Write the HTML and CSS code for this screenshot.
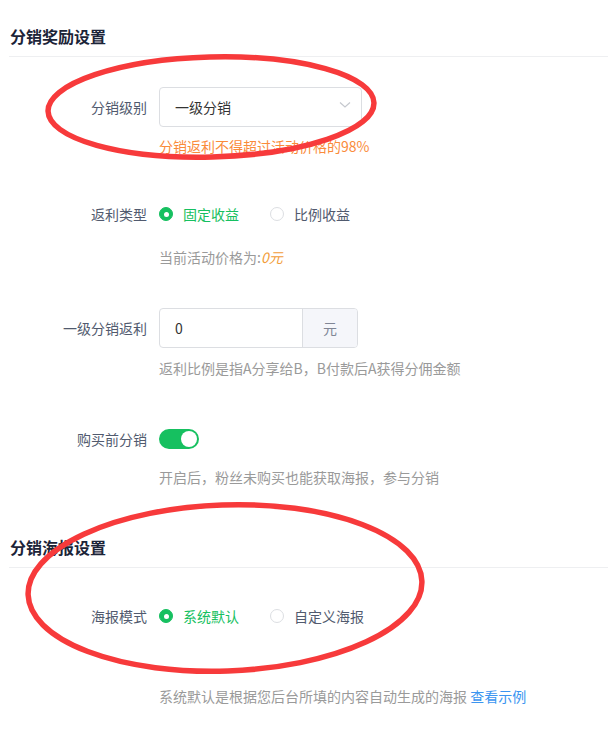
FILE: index.html
```html
<!DOCTYPE html>
<html lang="zh-CN">
<head>
    <meta charset="UTF-8">
    <meta name="viewport" content="width=device-width, initial-scale=1.0">
    <title>分销设置</title>

    <link rel="stylesheet" href="styles.css">
</head>
<body>
    <div class="page">
        <div class="section-title">分销奖励设置</div>

        <div class="form-item item-level">
            <div class="label">分销级别</div>
            <div class="control">
                <div class="select">
                    <span>一级分销</span>
                    <svg class="arrow" width="12" height="8" viewBox="0 0 12 8">
                        <polyline points="1,1.5 6,6 11,1.5" fill="none" stroke="#c5c8ce" stroke-width="1.2"/>
                    </svg>
                </div>
            </div>
        </div>
        <div class="tip error-tip">分销返利不得超过活动价格的98%</div>

        <div class="form-item item-type">
            <div class="label">返利类型</div>
            <div class="control">
                <label class="radio checked"><span class="radio-dot"></span>固定收益</label>
                <label class="radio"><span class="radio-dot"></span>比例收益</label>
            </div>
        </div>
        <div class="tip tip-price">当前活动价格为:<em>0元</em></div>

        <div class="form-item item-amount">
            <div class="label">一级分销返利</div>
            <div class="control">
                <div class="input-group">
                    <div class="input">0</div>
                    <div class="append">元</div>
                </div>
            </div>
        </div>
        <div class="tip tip-ratio">返利比例是指A分享给B，B付款后A获得分佣金额</div>

        <div class="form-item item-switch">
            <div class="label">购买前分销</div>
            <div class="control">
                <span class="switch on"><span class="knob"></span></span>
            </div>
        </div>
        <div class="tip tip-switch">开启后，粉丝未购买也能获取海报，参与分销</div>

        <div class="section-title second">分销海报设置</div>

        <div class="form-item item-poster">
            <div class="label">海报模式</div>
            <div class="control">
                <label class="radio checked"><span class="radio-dot"></span>系统默认</label>
                <label class="radio"><span class="radio-dot"></span>自定义海报</label>
            </div>
        </div>
        <div class="tip tip-poster">系统默认是根据您后台所填的内容自动生成的海报 <a href="#">查看示例</a></div>
    </div>

    <!-- hand drawn marks on top of the screenshot -->
    <svg class="marks" width="608" height="732" viewBox="0 0 608 732">
        <ellipse cx="211" cy="107" rx="163" ry="50" transform="rotate(-1.5 211 107)"/>
        <ellipse cx="225" cy="588" rx="197" ry="83" transform="rotate(-2 225 588)"/>
    </svg>
</body>
</html>
```

FILE: styles.css
```css
:root {
    --green: #16c060;
    --orange: #fa8b3a;
    --border: #dcdee2;
    --label: #515a6e;
    --help: #9a9a9a;
    --link: #3b95f0;
}

* {
    margin: 0;
    padding: 0;
    box-sizing: border-box;
}

body {
    width: 608px;
    height: 732px;
    overflow: hidden;
    background: #fff;
    font-family: "Noto Sans CJK SC", "Noto Sans", sans-serif;
    font-size: 14px;
    color: var(--label);
    position: relative;
}

.page {
    padding: 24px 0 0 9px;
}

.section-title {
    font-size: 16px;
    font-weight: bold;
    line-height: 24px;
    color: #1c2438;
    padding: 0 0 8px 1px;
    border-bottom: 1px solid #eeeff1;
}
.section-title.second {
    margin-top: 48px;
}

.form-item {
    display: flex;
    align-items: center;
    min-height: 32px;
}
.form-item .label {
    width: 138px;
    text-align: right;
    line-height: 20px;
}
.form-item .control {
    display: flex;
    align-items: center;
    margin-left: 12px;
}

.item-level { margin-top: 30px; }
.item-type { margin-top: 42px; }
.item-amount { margin-top: 41px; }
.item-switch { margin-top: 45px; }
.item-poster { margin-top: 32px; }

.tip {
    margin-left: 150px;
    line-height: 20px;
    color: var(--help);
}
.tip em {
    font-style: italic;
    color: #f29d38;
}
.tip a {
    color: var(--link);
    text-decoration: none;
}
.error-tip {
    margin-top: 9px;
    color: var(--orange);
}
.tip-price { margin-top: 17px; }
.tip-ratio { margin-top: 10px; }
.tip-switch { margin-top: 12px; }
.tip-poster { margin-top: 54px; }

.select {
    width: 203px;
    height: 40px;
    border: 1px solid var(--border);
    border-radius: 4px;
    display: flex;
    align-items: center;
    justify-content: space-between;
    padding: 0 10px 0 15px;
    color: #333;
}
.select .arrow {
    margin-top: -5px;
}

.radio {
    display: flex;
    align-items: center;
    line-height: 20px;
    margin-right: 31px;
    color: var(--label);
}
.radio-dot {
    width: 14px;
    height: 14px;
    border-radius: 50%;
    border: 1px solid var(--border);
    background: #fff;
    margin-right: 10px;
    position: relative;
}
.radio.checked {
    color: var(--green);
}
.radio.checked .radio-dot {
    border-color: var(--green);
    background: var(--green);
}
.radio.checked .radio-dot::after {
    content: "";
    position: absolute;
    left: 3.5px;
    top: 3.5px;
    width: 5px;
    height: 5px;
    border-radius: 50%;
    background: #fff;
}

.input-group {
    display: flex;
    width: 199px;
    height: 40px;
    border: 1px solid var(--border);
    border-radius: 4px;
    overflow: hidden;
}
.input-group .input {
    flex: 1;
    padding-left: 15px;
    line-height: 38px;
    color: #333;
}
.input-group .append {
    width: 55px;
    border-left: 1px solid var(--border);
    background: #f5f6fa;
    text-align: center;
    line-height: 38px;
    color: #808695;
}

.switch {
    width: 40px;
    height: 20px;
    border-radius: 10px;
    background: #ccc;
    position: relative;
    display: inline-block;
}
.switch.on {
    background: var(--green);
}
.switch .knob {
    position: absolute;
    top: 2px;
    left: 2px;
    width: 16px;
    height: 16px;
    border-radius: 50%;
    background: #fff;
}
.switch.on .knob {
    left: 22px;
}

.marks {
    position: absolute;
    top: 0;
    left: 0;
    pointer-events: none;
}
.marks ellipse {
    fill: none;
    stroke: #f73a3b;
    stroke-width: 5.5;
}
```
